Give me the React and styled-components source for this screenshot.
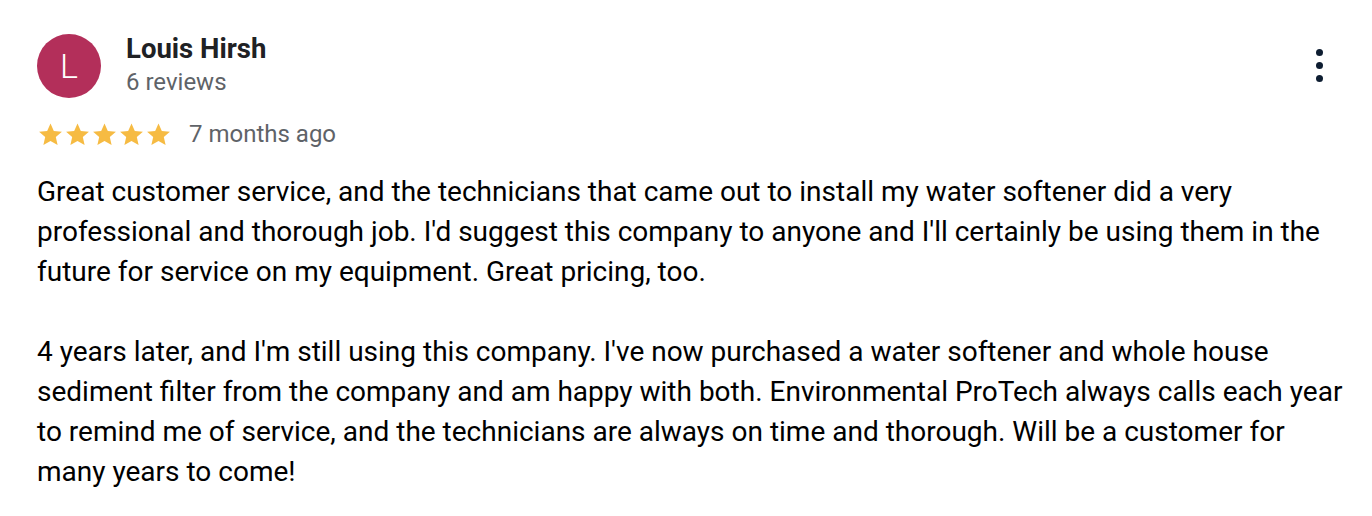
import React from "react";
import styled, { createGlobalStyle } from "styled-components";

const GlobalStyle = createGlobalStyle`
  body {
    margin: 0;
    background: #ffffff;
    font-family: Roboto, "Liberation Sans", Arial, sans-serif;
  }
`;

const Card = styled.div`
  width: 1372px;
  height: 516px;
  box-sizing: border-box;
  padding: 34px 22px 0 37px;
  background: #fff;
`;

const Header = styled.div`
  display: flex;
  align-items: flex-start;
`;

const Avatar = styled.div`
  width: 64px;
  height: 64px;
  border-radius: 50%;
  background: ${(props) => props.color};
  color: #fff;
  display: flex;
  align-items: center;
  justify-content: center;
  font-size: 34px;
  font-weight: 300;
  flex-shrink: 0;
`;

const Author = styled.div`
  margin-left: 25px;
  flex: 1;
`;

const Name = styled.div`
  font-size: 27.5px;
  font-weight: 700;
  color: #202124;
  line-height: 30px;
`;

const Count = styled.div`
  font-size: 24px;
  color: #5f6368;
  line-height: 30px;
  margin-top: 3px;
`;

const MoreButton = styled.button`
  border: 0;
  background: none;
  padding: 0;
  margin-top: 15px;
  margin-right: 27px;
  display: flex;
  flex-direction: column;
  gap: 6px;
  cursor: pointer;
`;

const Dot = styled.span`
  width: 7px;
  height: 7px;
  border-radius: 50%;
  background: #0e1d31;
`;

const Meta = styled.div`
  display: flex;
  align-items: center;
  margin-top: 22px;
`;

const Stars = styled.div`
  display: flex;
`;

const Ago = styled.span`
  margin-left: 17px;
  font-size: 24px;
  color: #5f6368;
`;

const Body = styled.p`
  margin: 24px 0 0;
  font-size: 28px;
  line-height: 40px;
  color: #000;
  white-space: pre-line;
`;

const Star = () => (
  <svg width="27" height="27" viewBox="0 0 24 24">
    <path
      fill="#f6bb43"
      d="M12 2.2l2.95 6.6 7.2.7-5.43 4.8 1.6 7.07L12 17.7l-6.32 3.67 1.6-7.07L1.85 9.5l7.2-.7z"
    />
  </svg>
);

const App = () => (
  <>
    <GlobalStyle />
    <Card>
      <Header>
        <Avatar color="#b32f5a">L</Avatar>
        <Author>
          <Name>Louis Hirsh</Name>
          <Count>6 reviews</Count>
        </Author>
        <MoreButton aria-label="More">
          <Dot />
          <Dot />
          <Dot />
        </MoreButton>
      </Header>
      <Meta>
        <Stars>
          {[0, 1, 2, 3, 4].map((i) => (
            <Star key={i} />
          ))}
        </Stars>
        <Ago>7 months ago</Ago>
      </Meta>
      <Body>
        {`Great customer service, and the technicians that came out to install my water softener did a very professional and thorough job. I'd suggest this company to anyone and I'll certainly be using them in the future for service on my equipment. Great pricing, too.

4 years later, and I'm still using this company. I've now purchased a water softener and whole house sediment filter from the company and am happy with both. Environmental ProTech always calls each year to remind me of service, and the technicians are always on time and thorough. Will be a customer for many years to come!`}
      </Body>
    </Card>
  </>
);

export default App;
